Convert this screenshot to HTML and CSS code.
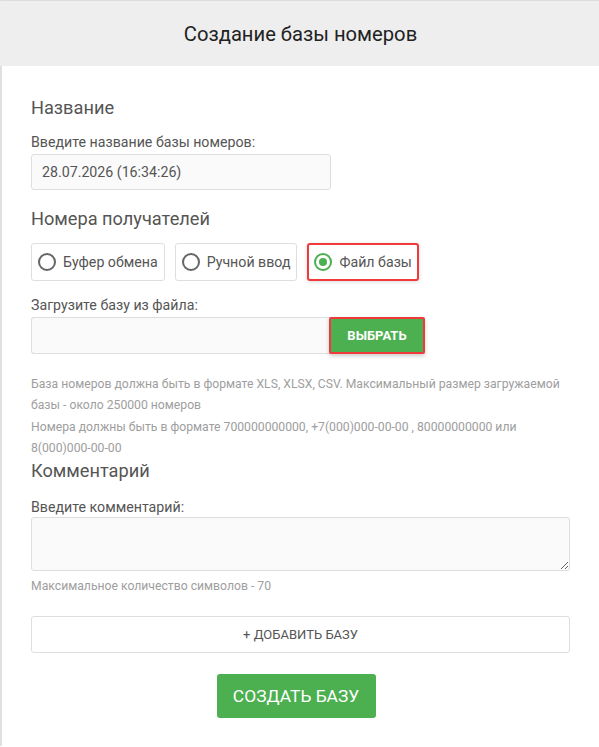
FILE: index.html
```html
<!DOCTYPE html>
<html lang="ru">
<head>
<meta charset="utf-8">
<title>Создание базы номеров</title>
<link rel="stylesheet" href="styles.css">
</head>
<body>
<div class="modal">
  <div class="modal-header">Создание базы номеров</div>
  <div class="modal-body">
    <h3 class="section-title first">Название</h3>
    <label class="field-label">Введите название базы номеров:</label>
    <div class="text-input name-input">28.07.2026 (16:34:26)</div>

    <h3 class="section-title recipients">Номера получателей</h3>
    <div class="radio-row">
      <div class="radio-box"><span class="radio"></span><span>Буфер обмена</span></div>
      <div class="radio-box"><span class="radio"></span><span>Ручной ввод</span></div>
      <div class="radio-box active"><span class="radio checked"></span><span>Файл базы</span></div>
    </div>

    <label class="field-label upload-label">Загрузите базу из файла:</label>
    <div class="file-row">
      <div class="text-input file-input"></div>
      <button class="pick-btn">Выбрать</button>
    </div>

    <p class="help">База номеров должна быть в формате XLS, XLSX, CSV. Максимальный размер загружаемой базы - около 250000 номеров<br>Номера должны быть в формате 700000000000, +7(000)000-00-00 , 80000000000 или 8(000)000-00-00</p>

    <h3 class="section-title comment">Комментарий</h3>
    <label class="field-label comment-label">Введите комментарий:</label>
    <textarea class="comment-area"></textarea>
    <p class="hint">Максимальное количество символов - 70</p>

    <button class="add-btn">+ Добавить базу</button>
    <div class="submit-row">
      <button class="create-btn">Создать базу</button>
    </div>
  </div>
</div>
</body>
</html>
```

FILE: styles.css
```css
html, body {
  margin: 0;
  padding: 0;
  background: #fff;
}

body {
  font-family: Roboto, "Liberation Sans", Arial, sans-serif;
  color: #555;
}

.modal {
  border-top: 1px solid #dcdcdc;
  border-left: 2px solid #e0e0e0;
  min-height: 746px;
  box-sizing: border-box;
}

.modal-header {
  height: 65px;
  background: #eeeeee;
  display: flex;
  align-items: center;
  justify-content: center;
  font-size: 20.2px;
  color: #222;
  margin-left: -2px;
  padding-left: 2px;
}

.modal-body {
  padding: 0 29px 0 29px;
}

.section-title {
  margin: 0;
  font-size: 18.2px;
  font-weight: 400;
  line-height: 22px;
  color: #555;
}

.section-title.first { padding-top: 31px; }
.section-title.recipients { margin-top: 18px; }
.section-title.comment { margin-top: 0; }

.field-label {
  display: block;
  font-size: 14.2px;
  line-height: 17px;
  margin-top: 15px;
  margin-bottom: 3px;
  color: #555;
}

.upload-label { margin-top: 16px; }
.comment-label { margin-top: 17px; margin-bottom: 1px; }

.text-input {
  box-sizing: border-box;
  height: 36px;
  background: #fafafa;
  border: 1px solid #dedede;
  border-radius: 3px;
  font-size: 14.2px;
  color: #555;
  display: flex;
  align-items: center;
  padding-left: 10px;
}

.name-input { width: 300px; }

.radio-row {
  display: flex;
  gap: 10px;
  margin-top: 13px;
}

.radio-box {
  box-sizing: border-box;
  height: 38px;
  border: 1px solid #dedede;
  border-radius: 3px;
  display: flex;
  align-items: center;
  gap: 7px;
  padding: 0 6px 0 6px;
  font-size: 14.2px;
  color: #555;
  background: #fff;
}

.radio-box.active {
  border: 2px solid #f0393a;
  padding: 0 5px 0 5px;
  box-shadow: 0 1px 4px rgba(0, 0, 0, 0.15);
}

.radio {
  box-sizing: border-box;
  width: 18px;
  height: 18px;
  border: 2px solid #666;
  border-radius: 50%;
  display: flex;
  align-items: center;
  justify-content: center;
}

.radio.checked {
  border-color: #4caf50;
}

.radio.checked::after {
  content: "";
  width: 8px;
  height: 8px;
  border-radius: 50%;
  background: #4caf50;
}

.file-row {
  display: flex;
  align-items: stretch;
  width: 394px;
  height: 37px;
}

.file-input {
  flex: 1;
  height: 37px;
  border-right: none;
  border-radius: 3px 0 0 3px;
}

.pick-btn {
  box-sizing: border-box;
  width: 96px;
  height: 37px;
  margin-left: -2px;
  background: #4caf50;
  border: 2px solid #f0393a;
  border-radius: 2px;
  color: #fff;
  font-family: inherit;
  font-weight: 700;
  font-size: 13px;
  text-transform: uppercase;
  box-shadow: 0 2px 4px rgba(0, 0, 0, 0.2);
  padding: 0;
}

.help {
  margin: 20px 0 0;
  font-size: 12.2px;
  line-height: 21.4px;
  color: #9e9e9e;
}

.comment-area {
  display: block;
  box-sizing: border-box;
  width: 100%;
  height: 54px;
  background: #fafafa;
  border: 1px solid #dedede;
  border-radius: 3px;
  margin: 0;
  font-family: inherit;
}

.hint {
  margin: 8px 0 0;
  font-size: 12.2px;
  line-height: 15px;
  color: #9e9e9e;
}

.add-btn {
  display: block;
  box-sizing: border-box;
  width: 100%;
  height: 37px;
  margin-top: 22px;
  background: #fff;
  border: 1px solid #dedede;
  border-radius: 3px;
  font-family: inherit;
  font-size: 13px;
  color: #555;
  text-transform: uppercase;
}

.submit-row {
  display: flex;
  justify-content: center;
  margin-top: 21px;
  padding-right: 9px;
}

.create-btn {
  box-sizing: border-box;
  width: 159px;
  height: 44px;
  background: #4caf50;
  border: none;
  border-radius: 3px;
  color: #fff;
  font-family: inherit;
  font-size: 17.4px;
  text-transform: uppercase;
}
```
